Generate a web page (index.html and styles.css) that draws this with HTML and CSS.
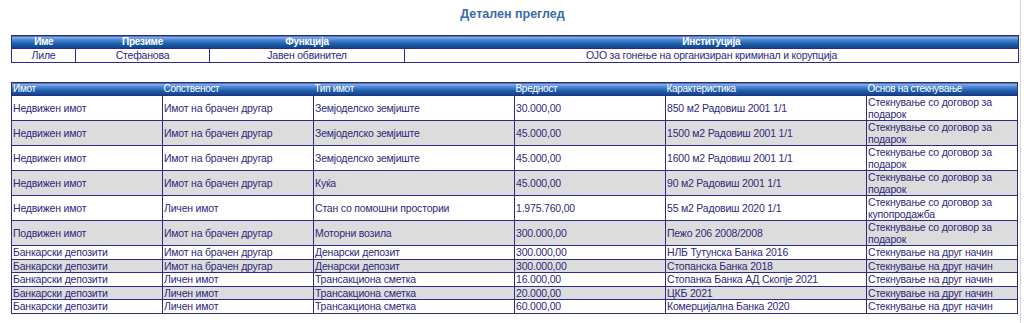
FILE: index.html
```html
<!DOCTYPE html>
<html lang="mk">
<head>
<meta charset="utf-8">
<title>Детален преглед</title>
<link rel="stylesheet" href="styles.css">
</head>
<body>
<div class="page">
  <h1 class="title">Детален преглед</h1>
  <table class="grid person">
    <colgroup>
      <col class="c-ime"><col class="c-prez"><col class="c-funk"><col class="c-inst">
    </colgroup>
    <thead>
      <tr><th>Име</th><th>Презиме</th><th>Функција</th><th>Институција</th></tr>
    </thead>
    <tbody>
      <tr><td>Лиле</td><td>Стефанова</td><td>Јавен обвинител</td><td>ОЈО за гонење на организиран криминал и корупција</td></tr>
    </tbody>
  </table>

  <table class="grid assets">
    <colgroup>
      <col class="w15"><col class="w15"><col class="w20"><col class="w15"><col class="w20"><col class="w15">
    </colgroup>
    <thead>
      <tr><th>Имот</th><th>Сопственост</th><th>Тип имот</th><th>Вредност</th><th>Карактеристика</th><th>Основ на стекнување</th></tr>
    </thead>
    <tbody>
      <tr><td>Недвижен имот</td><td>Имот на брачен другар</td><td>Земјоделско земјиште</td><td>30.000,00</td><td>850 м2 Радовиш 2001 1/1</td><td>Стекнување со договор за подарок</td></tr>
      <tr class="alt"><td>Недвижен имот</td><td>Имот на брачен другар</td><td>Земјоделско земјиште</td><td>45.000,00</td><td>1500 м2 Радовиш 2001 1/1</td><td>Стекнување со договор за подарок</td></tr>
      <tr><td>Недвижен имот</td><td>Имот на брачен другар</td><td>Земјоделско земјиште</td><td>45.000,00</td><td>1600 м2 Радовиш 2001 1/1</td><td>Стекнување со договор за подарок</td></tr>
      <tr class="alt"><td>Недвижен имот</td><td>Имот на брачен другар</td><td>Куќа</td><td>45.000,00</td><td>90 м2 Радовиш 2001 1/1</td><td>Стекнување со договор за подарок</td></tr>
      <tr><td>Недвижен имот</td><td>Личен имот</td><td>Стан со помошни простории</td><td>1.975.760,00</td><td>55 м2 Радовиш 2020 1/1</td><td>Стекнување со договор за купопродажба</td></tr>
      <tr class="alt"><td>Подвижен имот</td><td>Имот на брачен другар</td><td>Моторни возила</td><td>300.000,00</td><td>Пежо 206 2008/2008</td><td>Стекнување со договор за подарок</td></tr>
      <tr class="sm"><td>Банкарски депозити</td><td>Имот на брачен другар</td><td>Денарски депозит</td><td>300.000,00</td><td>НЛБ Тутунска Банка 2016</td><td>Стекнување на друг начин</td></tr>
      <tr class="sm alt"><td>Банкарски депозити</td><td>Имот на брачен другар</td><td>Денарски депозит</td><td>300.000,00</td><td>Стопанска Банка 2018</td><td>Стекнување на друг начин</td></tr>
      <tr class="sm"><td>Банкарски депозити</td><td>Личен имот</td><td>Трансакциона сметка</td><td>16.000,00</td><td>Стопанка Банка АД Скопје 2021</td><td>Стекнување на друг начин</td></tr>
      <tr class="sm alt"><td>Банкарски депозити</td><td>Личен имот</td><td>Трансакциона сметка</td><td>20.000,00</td><td>ЦКБ 2021</td><td>Стекнување на друг начин</td></tr>
      <tr class="sm"><td>Банкарски депозити</td><td>Личен имот</td><td>Трансакциона сметка</td><td>60.000,00</td><td>Комерцијална Банка 2020</td><td>Стекнување на друг начин</td></tr>
    </tbody>
  </table>
</div>
</body>
</html>
```

FILE: styles.css
```css
html, body {
  margin: 0;
  padding: 0;
  background: #ffffff;
}

body {
  font-family: "Liberation Sans", Arial, sans-serif;
}

.page {
  width: 1021px;
  min-height: 323px;
  box-sizing: border-box;
  padding: 0 0 0 11px;
  border-right: 1px solid #d4d4d4;
  display: flex;
  flex-direction: column;
}

.title {
  margin: 6px 0 0 0;
  height: 29px;
  text-align: center;
  font-size: 12.5px;
  font-weight: bold;
  line-height: 16px;
  color: #3b6ca6;
  width: 1003px;
}

.grid {
  width: 1007px;
  border-collapse: collapse;
  table-layout: fixed;
  border: 1px solid #2d2b86;
}

.grid th {
  background: linear-gradient(#93b7ea 0%, #4c84cf 30%, #1c5eb0 60%, #0e427f 100%);
  color: #ffffff;
  font-size: 10px;
  font-weight: normal;
  letter-spacing: -0.3px;
  line-height: 12px;
  height: 12px;
  padding: 0 1px;
  border: none;
  white-space: nowrap;
  overflow: hidden;
}

.grid td {
  border: 1px solid #2d2b86;
  color: #30297a;
  font-size: 10.5px;
  letter-spacing: -0.2px;
  line-height: 12px;
  padding: 0 1px;
  vertical-align: middle;
}

.person {
  margin-bottom: 19px;
}

.person th {
  text-align: center;
  font-weight: bold;
}

.person td {
  text-align: center;
  height: 13px;
  line-height: 13px;
}

.c-ime { width: 64px; }
.c-prez { width: 134px; }
.c-funk { width: 195px; }
.c-inst { width: 614px; }

.assets th {
  text-align: left;
}

.w15 { width: 151px; }
.w20 { width: 201px; }

.assets td {
  height: 24px;
  text-align: left;
}

.assets tr.sm td {
  height: 12.6px;
  line-height: 12.6px;
}

.assets tr.alt td {
  background: #dcdcdc;
}
```
